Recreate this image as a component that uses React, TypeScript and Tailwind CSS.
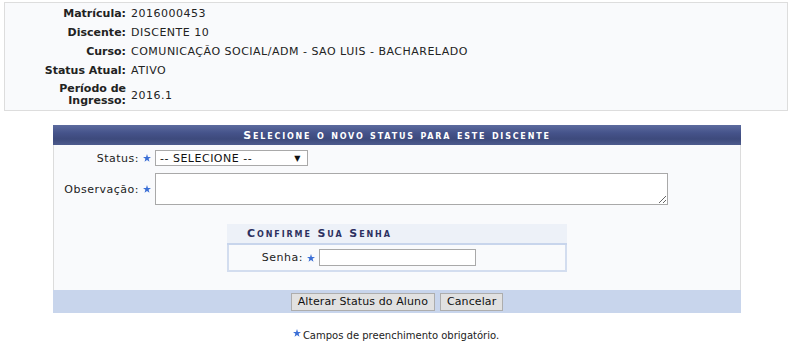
import React from "react";

const Star = () => (
  <svg width="8" height="8" viewBox="0 0 10 10" className="shrink-0">
    <polygon
      points="5,0 6.2,3.6 10,3.7 7,6 8.1,9.7 5,7.5 1.9,9.7 3,6 0,3.7 3.8,3.6"
      fill="#3b6fd6"
    />
  </svg>
);

const InfoRow = ({ label, value }: { label: React.ReactNode; value: string }) => (
  <div className="flex h-[19px] items-center">
    <div className="w-[121px] text-right font-bold">{label}</div>
    <div className="ml-[5px] tracking-[0.5px]">{value}</div>
  </div>
);

export default function App() {
  return (
    <div className="w-[792px] h-[344px] bg-white font-['DejaVu_Sans','Verdana',sans-serif] text-[11px] text-[#222] leading-[13px]">
      <div className="pt-[2px] px-[4px]">
        <div className="w-[784px] h-[109px] border border-[#dddddd] bg-[#f9fafc] pt-[1px]">
          <InfoRow label="Matrícula:" value="2016000453" />
          <InfoRow label="Discente:" value="DISCENTE 10" />
          <InfoRow label="Curso:" value="COMUNICAÇÃO SOCIAL/ADM - SAO LUIS - BACHARELADO" />
          <InfoRow label="Status Atual:" value="ATIVO" />
          <div className="flex items-center pt-[3px] pb-[2px]">
            <div className="w-[121px] text-right font-bold leading-[12px]">
              Período de
              <br />
              Ingresso:
            </div>
            <div className="ml-[5px] tracking-[0.5px]">2016.1</div>
          </div>
        </div>
      </div>

      <div className="ml-[53px] mt-[14px] w-[688px]">
        <div className="h-[20px] flex items-center justify-center bg-[linear-gradient(#5c6b9e,#45538a_40%,#3d4a7c_70%,#4d5b8d)] text-white font-bold tracking-[1.8px] [font-variant:small-caps] text-[11px]">
          Selecione o novo status para este discente
        </div>
        <div className="border-x border-[#dcdcdc] bg-[#f9fafc] pt-[5px] pb-[18px]">
          <div className="flex items-center h-[16px]">
            <div className="w-[85px] text-right tracking-[0.5px]">Status:</div>
            <div className="ml-[4px]"><Star /></div>
            <div className="ml-[4px] w-[153px] h-[16px] border border-[#a9a9a9] bg-white flex items-center justify-between pl-[4px] pr-[6px] text-[#111] tracking-[0.5px]">
              <span>-- SELECIONE --</span>
              <span className="text-[8px]">▼</span>
            </div>
          </div>
          <div className="flex items-center mt-[7px]">
            <div className="w-[85px] text-right tracking-[0.5px]">Observação:</div>
            <div className="ml-[4px]"><Star /></div>
            <textarea className="ml-[4px] block w-[513px] h-[32px] border border-[#a9a9a9] bg-white" />
          </div>
          <div className="mx-auto mt-[19px] w-[340px]">
            <div className="h-[21px] bg-[#edf1f8] flex items-center pl-[20px] font-bold tracking-[1.9px] [font-variant:small-caps] text-[#2c3060] border-b-2 border-[#c8d5ec]">
              Confirme Sua Senha
            </div>
            <div className="h-[27px] border-2 border-t-0 border-[#d3ddef] flex items-center bg-[#f9fafc]">
              <div className="w-[74px] text-right tracking-[0.5px]">Senha:</div>
              <div className="ml-[4px]"><Star /></div>
              <input type="password" className="ml-[4px] w-[157px] h-[17px] border border-[#a9a9a9] bg-white" />
            </div>
          </div>
        </div>
        <div className="h-[23px] bg-[#c8d5ec] flex items-center justify-center gap-[5px]">
          <button className="h-[18px] px-[6px] bg-[#e1e1e1] border border-[#adadad] text-[11px] text-[#111] leading-[13px] tracking-[0.1px]">
            Alterar Status do Aluno
          </button>
          <button className="h-[18px] px-[6px] bg-[#e1e1e1] border border-[#adadad] text-[11px] text-[#111] leading-[13px] tracking-[0.1px]">
            Cancelar
          </button>
        </div>
      </div>

      <div className="mt-[16px] flex items-center justify-center text-[10px] text-[#222]">
        <span className="mr-[2px] -mt-[6px]"><Star /></span>
        <span>Campos de preenchimento obrigatório.</span>
      </div>
    </div>
  );
}
